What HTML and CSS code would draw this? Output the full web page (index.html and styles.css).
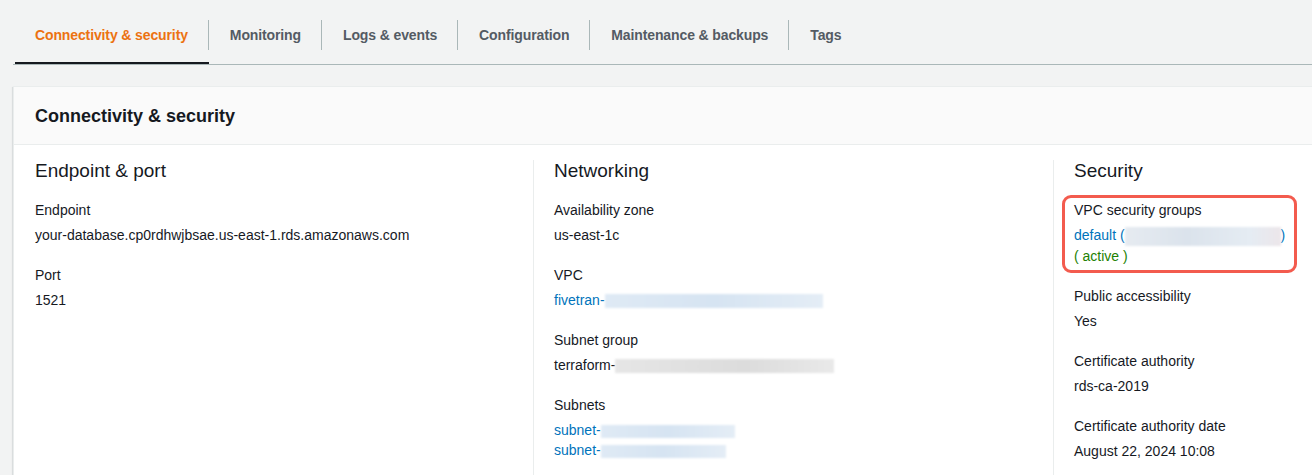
FILE: index.html
```html
<!DOCTYPE html>
<html lang="en">
<head>
<meta charset="utf-8">
<title>Connectivity &amp; security</title>
<link rel="stylesheet" href="styles.css">
</head>
<body>
<div class="page">
  <nav class="tabs">
    <div class="tab tab-active"><span class="tab-label">Connectivity &amp; security</span></div>
    <div class="tab"><span class="tab-label">Monitoring</span></div>
    <div class="tab"><span class="tab-label">Logs &amp; events</span></div>
    <div class="tab"><span class="tab-label">Configuration</span></div>
    <div class="tab"><span class="tab-label">Maintenance &amp; backups</span></div>
    <div class="tab"><span class="tab-label tab-last">Tags</span></div>
  </nav>

  <section class="card">
    <header class="card-header">Connectivity &amp; security</header>
    <div class="card-body">
      <div class="col col-first">
        <h3 class="col-title">Endpoint &amp; port</h3>
        <div class="item">
          <div class="label">Endpoint</div>
          <div class="value">your-database.cp0rdhwjbsae.us-east-1.rds.amazonaws.com</div>
        </div>
        <div class="item">
          <div class="label">Port</div>
          <div class="value">1521</div>
        </div>
      </div>

      <div class="col">
        <h3 class="col-title">Networking</h3>
        <div class="item">
          <div class="label">Availability zone</div>
          <div class="value">us-east-1c</div>
        </div>
        <div class="item">
          <div class="label">VPC</div>
          <div class="value"><span class="link">fivetran-</span><span class="redact redact-blue redact-vpc"></span></div>
        </div>
        <div class="item">
          <div class="label">Subnet group</div>
          <div class="value">terraform-<span class="redact redact-grey redact-subnetgroup"></span></div>
        </div>
        <div class="item">
          <div class="label">Subnets</div>
          <div class="value"><span class="link">subnet-</span><span class="redact redact-blue redact-subnet1"></span></div>
          <div class="value"><span class="link">subnet-</span><span class="redact redact-blue redact-subnet2"></span></div>
        </div>
      </div>

      <div class="col">
        <h3 class="col-title">Security</h3>
        <div class="item item-highlighted">
          <div class="label">VPC security groups</div>
          <div class="value"><span class="link">default (</span><span class="redact redact-slate redact-sg"></span><span class="link">)</span></div>
          <div class="value status-active">( active )</div>
          <div class="highlight"></div>
        </div>
        <div class="item">
          <div class="label">Public accessibility</div>
          <div class="value">Yes</div>
        </div>
        <div class="item">
          <div class="label">Certificate authority</div>
          <div class="value">rds-ca-2019</div>
        </div>
        <div class="item">
          <div class="label">Certificate authority date</div>
          <div class="value">August 22, 2024 10:08</div>
        </div>
      </div>
    </div>
  </section>
</div>
</body>
</html>
```

FILE: styles.css
```css
* {
  box-sizing: border-box;
}

html, body {
  margin: 0;
  padding: 0;
  background: #f2f3f3;
  overflow: hidden;
}

body {
  font-family: "Liberation Sans", Arial, sans-serif;
  color: #16191f;
  font-size: 14px;
}

.page {
  padding-left: 13px;
  width: 1600px;
}

/* Tabs */
.tabs {
  display: flex;
  height: 65px;
  border-bottom: 1px solid #aab7b8;
  padding-left: 2px;
}

.tab {
  height: 64px;
  padding-top: 20px;
  display: flex;
  align-items: flex-start;
}

.tab-active {
  box-shadow: inset 0 -2px 0 #16191f;
}

.tab-label {
  display: block;
  line-height: 30px;
  padding: 0 20px 0 20px;
  border-right: 1px solid #aab7b8;
  font-weight: bold;
  font-size: 14px;
  letter-spacing: -0.12px;
  color: #545b64;
  white-space: nowrap;
}

.tab + .tab .tab-label {
  padding-left: 21px;
}

.tab-active .tab-label {
  color: #ec7211;
}

.tab-label.tab-last {
  border-right: none;
}

/* Card */
.card {
  margin-top: 21px;
  background: #ffffff;
  border: 1px solid #eaeded;
  box-shadow: 0 1px 1px 0 rgba(0, 28, 36, 0.12), -1px 1px 1px 0 rgba(0, 28, 36, 0.08);
  height: 420px;
}

.card-header {
  background: #fafafa;
  border-bottom: 1px solid #eaeded;
  padding: 18px 20px 17px 21px;
  font-size: 18px;
  line-height: 22px;
  font-weight: bold;
  color: #16191f;
}

.card-body {
  display: grid;
  grid-template-columns: 519px 520px 520px;
  padding-top: 15px;
}

.col {
  border-left: 1px solid #eaeded;
  padding-left: 20px;
  padding-top: 1px;
}

.col-first {
  border-left: none;
  padding-left: 21px;
}

.col-title {
  margin: 0 0 19px 0;
  font-size: 19px;
  line-height: 20px;
  font-weight: normal;
  color: #16191f;
}

.item {
  margin-bottom: 20px;
}

.label {
  line-height: 20px;
  margin-bottom: 5px;
  color: #16191f;
}

.value {
  line-height: 20px;
  color: #16191f;
  white-space: nowrap;
}

.link {
  color: #0073bb;
}

.status-active {
  color: #1d8102;
}

/* Redacted (blurred) bits */
.redact {
  display: inline-block;
  vertical-align: middle;
  filter: blur(1px);
}

.redact-blue {
  background: linear-gradient(90deg, #dfeaf5 0%, #d6e4f2 50%, #e4edf6 100%);
}

.redact-grey {
  background: linear-gradient(90deg, #e6e6e6 0%, #dcdcdc 60%, #e9e9e9 100%);
}

.redact-slate {
  background: linear-gradient(90deg, #e6ebf1 0%, #dbe3ec 40%, #e5ecf3 80%, #ece6ea 100%);
}

.redact-vpc {
  width: 218px;
  height: 14px;
}

.redact-subnetgroup {
  width: 219px;
  height: 14px;
}

.redact-subnet1 {
  width: 134px;
  height: 13px;
}

.redact-subnet2 {
  width: 125px;
  height: 13px;
}

.redact-sg {
  width: 156px;
  height: 19px;
}

/* Highlight overlay */
.item-highlighted {
  position: relative;
}

.highlight {
  position: absolute;
  top: -5px;
  left: -12px;
  width: 235px;
  height: 78px;
  border: 3px solid #f35b4e;
  border-radius: 9px;
  pointer-events: none;
}
```
